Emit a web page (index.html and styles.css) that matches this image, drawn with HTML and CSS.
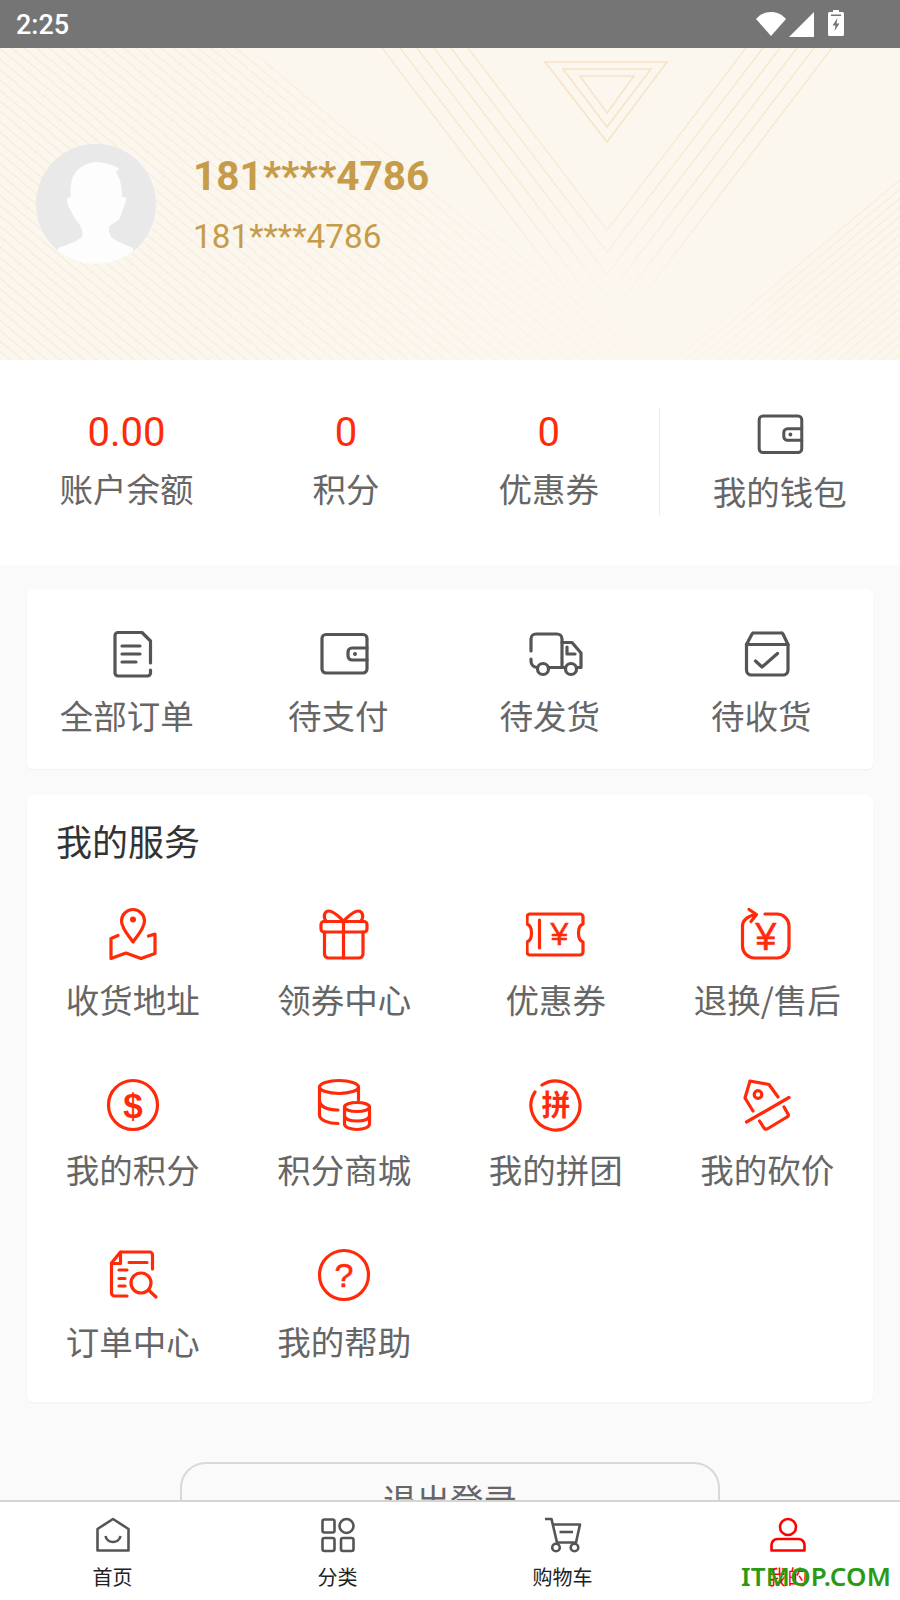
FILE: index.html
```html
<!DOCTYPE html>
<html lang="zh-CN">
  <head>
    <meta charset="UTF-8" />
    <title>我的</title>
    <link rel="stylesheet" href="styles.css">
  </head>
  <body>
    <div class="status-bar">
      <span class="time">2:25</span>
      <div class="status-icons">
        <svg width="30" height="24" viewBox="0 0 30 24"><path d="M0 7C4 2.500 9 0 15 0s11 2.500 15 7L15 24z" fill="#fff"/></svg>
        <svg width="25" height="25" viewBox="0 0 25 25"><path d="M25 0v25H0z" fill="#fff"/></svg>
        <svg class="battery" width="16" height="26" viewBox="0 0 16 26"><path d="M5 0h6v2h3.500a1.500 1.500 0 0 1 1.500 1.500V24.500a1.500 1.500 0 0 1-1.500 1.500H1.500A1.500 1.500 0 0 1 0 24.500V3.500A1.500 1.500 0 0 1 1.500 2H5z" fill="#fff"/><path d="M9.500 8L4.500 15.500H7.500L6.500 21L11.500 13.500H8.500z" fill="#757575"/><rect x="3" y="4.500" width="10" height="1.500" fill="#757575"/></svg>
      </div>
    </div>

    <main class="content">
      <header class="profile">
        <svg class="profile-bg" width="900" height="312" viewBox="0 0 900 312">
          <defs>
            <pattern id="hatch-l" width="8" height="8" patternUnits="userSpaceOnUse" patternTransform="rotate(40)">
              <rect width="8" height="1" fill="#f6e7cb"/>
            </pattern>
            <pattern id="hatch-r" width="7" height="7" patternUnits="userSpaceOnUse" patternTransform="rotate(50)">
              <rect width="1" height="7" fill="#f6e7cb"/>
            </pattern>
            <linearGradient id="fade-l" x1="0" y1="0" x2="1" y2="0">
              <stop offset="0" stop-color="#fff" stop-opacity="0.8"/>
              <stop offset="0.55" stop-color="#fff" stop-opacity="0.5"/>
              <stop offset="1" stop-color="#fff" stop-opacity="0"/>
            </linearGradient>
            <linearGradient id="fade-r" x1="1" y1="0" x2="0" y2="1">
              <stop offset="0" stop-color="#fff" stop-opacity="0.8"/>
              <stop offset="1" stop-color="#fff" stop-opacity="0.15"/>
            </linearGradient>
            <linearGradient id="fade-v" x1="0" y1="0" x2="0" y2="1">
              <stop offset="0" stop-color="#fff"/>
              <stop offset="0.45" stop-color="#fff" stop-opacity="0.7"/>
              <stop offset="0.85" stop-color="#fff" stop-opacity="0"/>
            </linearGradient>
            <mask id="mask-l"><rect width="700" height="312" fill="url(#fade-l)"/></mask>
            <mask id="mask-r"><rect x="660" y="130" width="240" height="182" fill="url(#fade-r)"/></mask>
            <mask id="mask-v"><rect width="900" height="312" fill="url(#fade-v)"/></mask>
          </defs>
          <polygon points="0,0 247,0 666,312 0,312" fill="url(#hatch-l)" mask="url(#mask-l)"/>
          <polygon points="900,130 900,312 672,312" fill="url(#hatch-r)" mask="url(#mask-r)"/>
          <g fill="none" stroke="#f6e4c4" stroke-width="1.200" mask="url(#mask-v)">
            <path d="M468 0L607 182L746 0"/>
            <path d="M451 0L607 204L763 0"/>
            <path d="M434 0L607 226L780 0"/>
            <path d="M417 0L607 249L797 0"/>
            <path d="M400 0L607 271L814 0"/>
            <path d="M382 0L607 295L832 0"/>
          </g>
          <g fill="none" stroke="#f6e4c4" stroke-width="1.500">
            <path d="M545 14H667L607 94z"/>
            <path d="M563 21H651L607 79z"/>
            <path d="M580 28H634L607 65z"/>
          </g>
        </svg>
        <div class="avatar">
          <svg width="120" height="120" viewBox="0 0 120 120">
            <defs><clipPath id="avatar-clip"><circle cx="60" cy="60" r="60"/></clipPath></defs>
            <circle cx="60" cy="60" r="60" fill="#e9e9e9"/>
            <path clip-path="url(#avatar-clip)" fill="#fdfdfd" d="M61 18C68 18 76 21 83 24L80 29C84 33 86 42 86 53C89 52 91 54 90 57C88 64 85 69 84 74C82 78 76 79 73 83C73 88 74 92 76 94C82 98 90 101 97 104L97 125H22V104C30 101 40 98 46 93C47 90 46 86 45 83C42 78 39 75 37 71C35 66 31 62 31 57C31 54 33 52 35 53C34 46 35 40 36 36C38 26 50 18 61 18z"/>
          </svg>
        </div>
        <div class="profile-text">
          <div class="profile-name">181****4786</div>
          <div class="profile-sub">181****4786</div>
        </div>
      </header>

      <section class="stats">
        <div class="stat"><div class="stat-num">0.00</div><div class="stat-label">账户余额</div></div>
        <div class="stat"><div class="stat-num">0</div><div class="stat-label">积分</div></div>
        <div class="stat"><div class="stat-num">0</div><div class="stat-label">优惠券</div></div>
        <div class="wallet">
          <svg class="ic" width="66" height="62" viewBox="0 0 60 56"><path d="M53 22V12.500a4 4 0 0 0-4-4H12a4 4 0 0 0-4 4V43a4 4 0 0 0 4 4H49a4 4 0 0 0 4-4V34"/><path d="M53 22H38a4 4 0 0 0-4 4V30a4 4 0 0 0 4 4H53z"/><circle class="dot" cx="41" cy="28" r="2"/></svg>
          <div class="wallet-label">我的钱包</div>
        </div>
      </section>

      <section class="card orders">
        <div class="cell">
          <svg class="ic" width="60" height="56" viewBox="0 0 60 56"><path d="M47.500 37V15L39 6.500H15a3 3 0 0 0-3 3V47a3 3 0 0 0 3 3H44.500a3 3 0 0 0 3-3V44"/><path d="M19 20H37M19 28H37M19 36H33"/></svg>
          <span class="cell-label">全部订单</span>
        </div>
        <div class="cell">
          <svg class="ic" width="60" height="56" viewBox="0 0 60 56"><path d="M53 22V12.500a4 4 0 0 0-4-4H12a4 4 0 0 0-4 4V43a4 4 0 0 0 4 4H49a4 4 0 0 0 4-4V34"/><path d="M53 22H38a4 4 0 0 0-4 4V30a4 4 0 0 0 4 4H53z"/><circle class="dot" cx="41" cy="28" r="2"/></svg>
          <span class="cell-label">待支付</span>
        </div>
        <div class="cell">
          <svg class="ic" width="60" height="56" viewBox="0 0 60 56"><path d="M5 25V13a5 5 0 0 1 5-5H31a5 5 0 0 1 5 5V41.500"/><path d="M5 33V35a6.500 6.500 0 0 0 6 6.500"/><path d="M22.500 41.500H39.500"/><path d="M36 16.500H46L55 27V41.500H51"/><path d="M41 21V28H49"/><circle cx="17" cy="43" r="5.500"/><circle cx="45" cy="43" r="5.500"/></svg>
          <span class="cell-label">待发货</span>
        </div>
        <div class="cell">
          <svg class="ic" width="60" height="56" viewBox="0 0 60 56"><path d="M15 8a2 2 0 0 1 2-1H44a2 2 0 0 1 2 1L51 18.500V44a5 5 0 0 1-5 5H14.500a5 5 0 0 1-5-5V18.500z"/><path d="M9.500 18.500H51"/><path d="M18.500 35L25 41L40.500 27.500"/></svg>
          <span class="cell-label">待收货</span>
        </div>
      </section>

      <section class="card services">
        <h3 class="card-title">我的服务</h3>
        <div class="service-grid">
          <div class="service">
            <svg class="ic red" width="60" height="56" viewBox="0 0 60 56"><path d="M30 35C25 28 18.500 21 18.500 14A11.500 11.500 0 0 1 41.500 14C41.500 21 35 28 30 35z"/><circle class="dot" cx="30" cy="12.500" r="3"/><path d="M15 28.500L8 31.500V51.500L23 46L38 51.500L52 46.500V27L45.500 29"/></svg>
            <span>收货地址</span>
          </div>
          <div class="service">
            <svg class="ic red" width="60" height="56" viewBox="0 0 60 56"><rect x="7" y="14.500" width="46" height="10.500" rx="3"/><path d="M10.500 25V47a4 4 0 0 0 4 4H45a4 4 0 0 0 4-4V25"/><path d="M29.500 14V51"/><path d="M29.500 14C24 9 20 4 15 4C10 4 9 10 12 14"/><path d="M29.500 14C35 9 39 4 44 4C49 4 50 10 47 14"/></svg>
            <span>领券中心</span>
          </div>
          <div class="service">
            <svg class="ic red" width="60" height="56" viewBox="0 0 60 56"><path d="M1 10a3 3 0 0 1 3-3H54a3 3 0 0 1 3 3V17C51 19 51 33 57 35V45a3 3 0 0 1-3 3H4a3 3 0 0 1-3-3V35C7 33 7 19 1 17z"/><path d="M13.500 13V41"/><text class="glyph yen" x="33.500" y="38" font-size="32">¥</text></svg>
            <span>优惠券</span>
          </div>
          <div class="service">
            <svg class="ic red" width="60" height="56" viewBox="0 0 60 56"><path d="M28 7H40a12 12 0 0 1 12 12V39a12 12 0 0 1-12 12H17.500a12 12 0 0 1-12-12V19C5.500 14 9 10 18 7.500"/><path d="M12 2.500L19.500 7.500L14 14.500"/><text class="glyph yen" x="28.700" y="43" font-size="38">¥</text></svg>
            <span>退换/售后</span>
          </div>
          <div class="service">
            <svg class="ic red" width="60" height="56" viewBox="0 0 60 56"><circle cx="30" cy="28" r="24.500"/><text class="glyph" x="30" y="41" font-size="35">$</text></svg>
            <span>我的积分</span>
          </div>
          <div class="service">
            <svg class="ic red" width="60" height="56" viewBox="0 0 60 56"><ellipse cx="25" cy="10" rx="19.500" ry="6.500"/><path d="M44.500 10V23"/><path d="M5.500 10V38C5.500 43 14 46.500 24 46.500"/><path d="M5.500 24C6 30 14 33 24 33"/><ellipse cx="43" cy="30" rx="12.500" ry="4.500"/><path d="M30.500 30V47C30.500 50 36 52.500 43 52.500S55.500 50 55.500 47V30"/><path d="M30.500 39C31 42 36 44 43 44S55 42 55.500 39"/></svg>
            <span>积分商城</span>
          </div>
          <div class="service">
            <svg class="ic red" width="60" height="56" viewBox="0 0 60 56"><path d="M16 8A24.500 24.500 0 1 1 9 15"/><text class="glyph cjk" x="30" y="38.500" font-size="29">拼</text></svg>
            <span>我的拼团</span>
          </div>
          <div class="service">
            <svg class="ic red" width="60" height="56" viewBox="0 0 60 56"><path d="M16 34L8 21L13 4L32 7.500L41 20"/><circle cx="21" cy="17.500" r="3.800"/><path d="M9.500 45L52 20.500"/><path d="M47 30L51 37Q52 39 50 40L31 51.500Q28.500 53 27 51L22.500 44"/></svg>
            <span>我的砍价</span>
          </div>
          <div class="service">
            <svg class="ic red" width="60" height="56" viewBox="0 0 60 56"><path d="M49.500 22V8a3 3 0 0 0-3-3H17.500L8.500 16V46a3 3 0 0 0 3 3H24"/><path d="M17.500 5V16.500H8.500"/><path d="M26 15.500H44M16 23H24M16 31.500H22M16 39H22"/><circle cx="38" cy="36" r="10"/><path d="M45.500 43L53 50"/></svg>
            <span class="last-row">订单中心</span>
          </div>
          <div class="service">
            <svg class="ic red" width="60" height="56" viewBox="0 0 60 56"><circle cx="30" cy="28" r="24.500"/><text class="glyph yen" x="30" y="40" font-size="34">?</text></svg>
            <span class="last-row">我的帮助</span>
          </div>
        </div>
      </section>

      <div class="logout">退出登录</div>
    </main>

    <nav class="tabbar">
      <div class="tab">
        <svg class="tab-ic" width="40" height="40" viewBox="0 0 40 40"><path d="M20 4L35.500 14V35.500H4.500V14z"/><path d="M12.500 21C14 29 26 29 27.500 21"/></svg>
        <span>首页</span>
      </div>
      <div class="tab">
        <svg class="tab-ic" width="40" height="40" viewBox="0 0 40 40"><rect x="4.500" y="4.500" width="12" height="13" rx="2"/><circle cx="28.500" cy="11" r="7"/><rect x="4.500" y="23" width="12" height="13" rx="2"/><rect x="23" y="23" width="12.500" height="13" rx="2"/></svg>
        <span>分类</span>
      </div>
      <div class="tab">
        <svg class="tab-ic" width="40" height="40" viewBox="0 0 40 40"><path d="M2 4H8.500L14 27.500H33L37 9.500H10"/><path d="M16.500 17H30"/><circle cx="13" cy="32.500" r="3.800"/><circle cx="31.500" cy="32.500" r="3.800"/></svg>
        <span>购物车</span>
      </div>
      <div class="tab active">
        <svg class="tab-ic" width="40" height="40" viewBox="0 0 40 40"><circle cx="20" cy="12" r="8"/><path d="M3.500 35.500V30a6 6 0 0 1 6-6H30.500a6 6 0 0 1 6 6V35.500z"/></svg>
        <span>我的</span>
      </div>
    </nav>

    <div class="watermark">ITMOP.COM</div>
  </body>
</html>
```

FILE: styles.css
```css
html,
body {
  margin: 0;
  height: 100%;
}
body {
  position: relative;
  width: 900px;
  height: 1600px;
  display: flex;
  flex-direction: column;
  overflow: hidden;
  background: #fafafa;
  font-family: "Noto Sans CJK SC", "Noto Sans", sans-serif;
}

.status-bar {
  flex: none;
  height: 48px;
  box-sizing: border-box;
  background: #757575;
  display: flex;
  align-items: center;
  justify-content: space-between;
  padding: 1px 56px 0 16px;
  color: #fff;
}
.time {
  font-family: Roboto, sans-serif;
  font-size: 27px;
  font-weight: 500;
}
.status-icons {
  display: flex;
  align-items: flex-start;
  gap: 3px;
}
.battery {
  margin-left: 11px;
  margin-top: -2px;
}

.content {
  flex: 1;
  min-height: 0;
  overflow: hidden;
}

.profile {
  position: relative;
  height: 312px;
  box-sizing: border-box;
  padding: 96px 0 0 36px;
  display: flex;
  background: #fbf6ee;
}
.profile-bg {
  position: absolute;
  left: 0;
  top: 0;
}
.avatar {
  position: relative;
  width: 120px;
  height: 120px;
}
.profile-text {
  position: relative;
  margin-left: 37px;
  color: #c69c4a;
  font-family: Roboto, sans-serif;
}
.profile-name {
  margin-top: 4px;
  font-size: 40.500px;
  font-weight: 700;
  line-height: 56px;
}
.profile-sub {
  margin-top: 9px;
  font-size: 33.300px;
  line-height: 48px;
}

.stats {
  height: 205px;
  box-sizing: border-box;
  padding-top: 48px;
  display: flex;
  align-items: flex-start;
  background: #fff;
}
.stat {
  padding: 0 59.500px;
  text-align: center;
}
.stat-num {
  height: 50px;
  font-family: Roboto, sans-serif;
  font-size: 40px;
  line-height: 50px;
  color: #ff2a0a;
}
.stat-label {
  margin-top: 5px;
  font-size: 33.500px;
  line-height: 50px;
  color: #666;
}
.wallet {
  flex: 1;
  height: 108px;
  border-left: 1px solid #ececec;
  display: flex;
  flex-direction: column;
  align-items: center;
}
.wallet-label {
  margin-top: 5px;
  font-size: 33.500px;
  line-height: 50px;
  color: #666;
}

.ic {
  display: block;
  fill: none;
  stroke: #555;
  stroke-width: 3.200;
  stroke-linecap: round;
  stroke-linejoin: round;
}
.ic.red {
  stroke: #ff2a0a;
}
.ic .dot {
  fill: #555;
  stroke: none;
}
.ic.red .dot {
  fill: #ff2a0a;
}
.glyph {
  fill: #ff2a0a;
  stroke: none;
  font-family: "Liberation Sans", sans-serif;
  font-weight: 700;
  text-anchor: middle;
}
.glyph.yen {
  font-weight: 400;
  stroke: #ff2a0a;
  stroke-width: 0.500;
}
.glyph.cjk {
  font-family: "Noto Sans CJK SC", sans-serif;
}

.card {
  margin: 0 27px;
  background: #fff;
  border-radius: 6px;
  box-shadow: 0 1px 2px rgba(0, 0, 0, 0.04);
}
.orders {
  margin-top: 24px;
  height: 180px;
  box-sizing: border-box;
  padding-top: 37px;
  display: grid;
  grid-template-columns: repeat(4, 1fr);
}
.cell {
  display: flex;
  flex-direction: column;
  align-items: center;
}
.cell-label {
  margin: 8px 12px 0 0;
  font-size: 33.500px;
  line-height: 50px;
  color: #666;
}

.services {
  margin-top: 26px;
  height: 607px;
  box-sizing: border-box;
  padding-top: 20px;
}
.card-title {
  margin: 0 0 0 29px;
  font-size: 36px;
  font-weight: 400;
  line-height: 50px;
  color: #333;
}
.service-grid {
  margin-top: 42px;
  display: grid;
  grid-template-columns: repeat(4, 1fr);
  grid-auto-rows: 170px;
}
.service {
  display: flex;
  flex-direction: column;
  align-items: center;
  font-size: 33.500px;
  line-height: 50px;
  color: #666;
}
.service span {
  margin-top: 11px;
}
.service .last-row {
  margin-top: 13px;
}

.logout {
  box-sizing: border-box;
  width: 540px;
  height: 80px;
  margin: 60px auto 0;
  border: 2px solid #d8d8d8;
  border-radius: 26px;
  font-size: 33.500px;
  line-height: 70px;
  text-align: center;
  color: #666;
}

.tabbar {
  flex: none;
  height: 100px;
  box-sizing: border-box;
  border-top: 2px solid #d5d5d5;
  background: #fff;
  display: grid;
  grid-template-columns: repeat(4, 1fr);
}
.tab {
  display: flex;
  flex-direction: column;
  align-items: center;
  padding-top: 13px;
  font-size: 20px;
  line-height: 28px;
  color: #222;
}
.tab span {
  margin-top: 8px;
}
.tab-ic {
  display: block;
  fill: none;
  stroke: #555;
  stroke-width: 2.600;
  stroke-linejoin: round;
}
.tab.active {
  color: #f00;
}
.tab.active .tab-ic {
  stroke: #f00;
}

.watermark {
  position: absolute;
  left: 741px;
  top: 1558px;
  font-family: "Noto Sans", sans-serif;
  font-size: 26px;
  font-weight: 600;
  letter-spacing: 0.200px;
  line-height: 36px;
  color: #2a9a12;
}
```
